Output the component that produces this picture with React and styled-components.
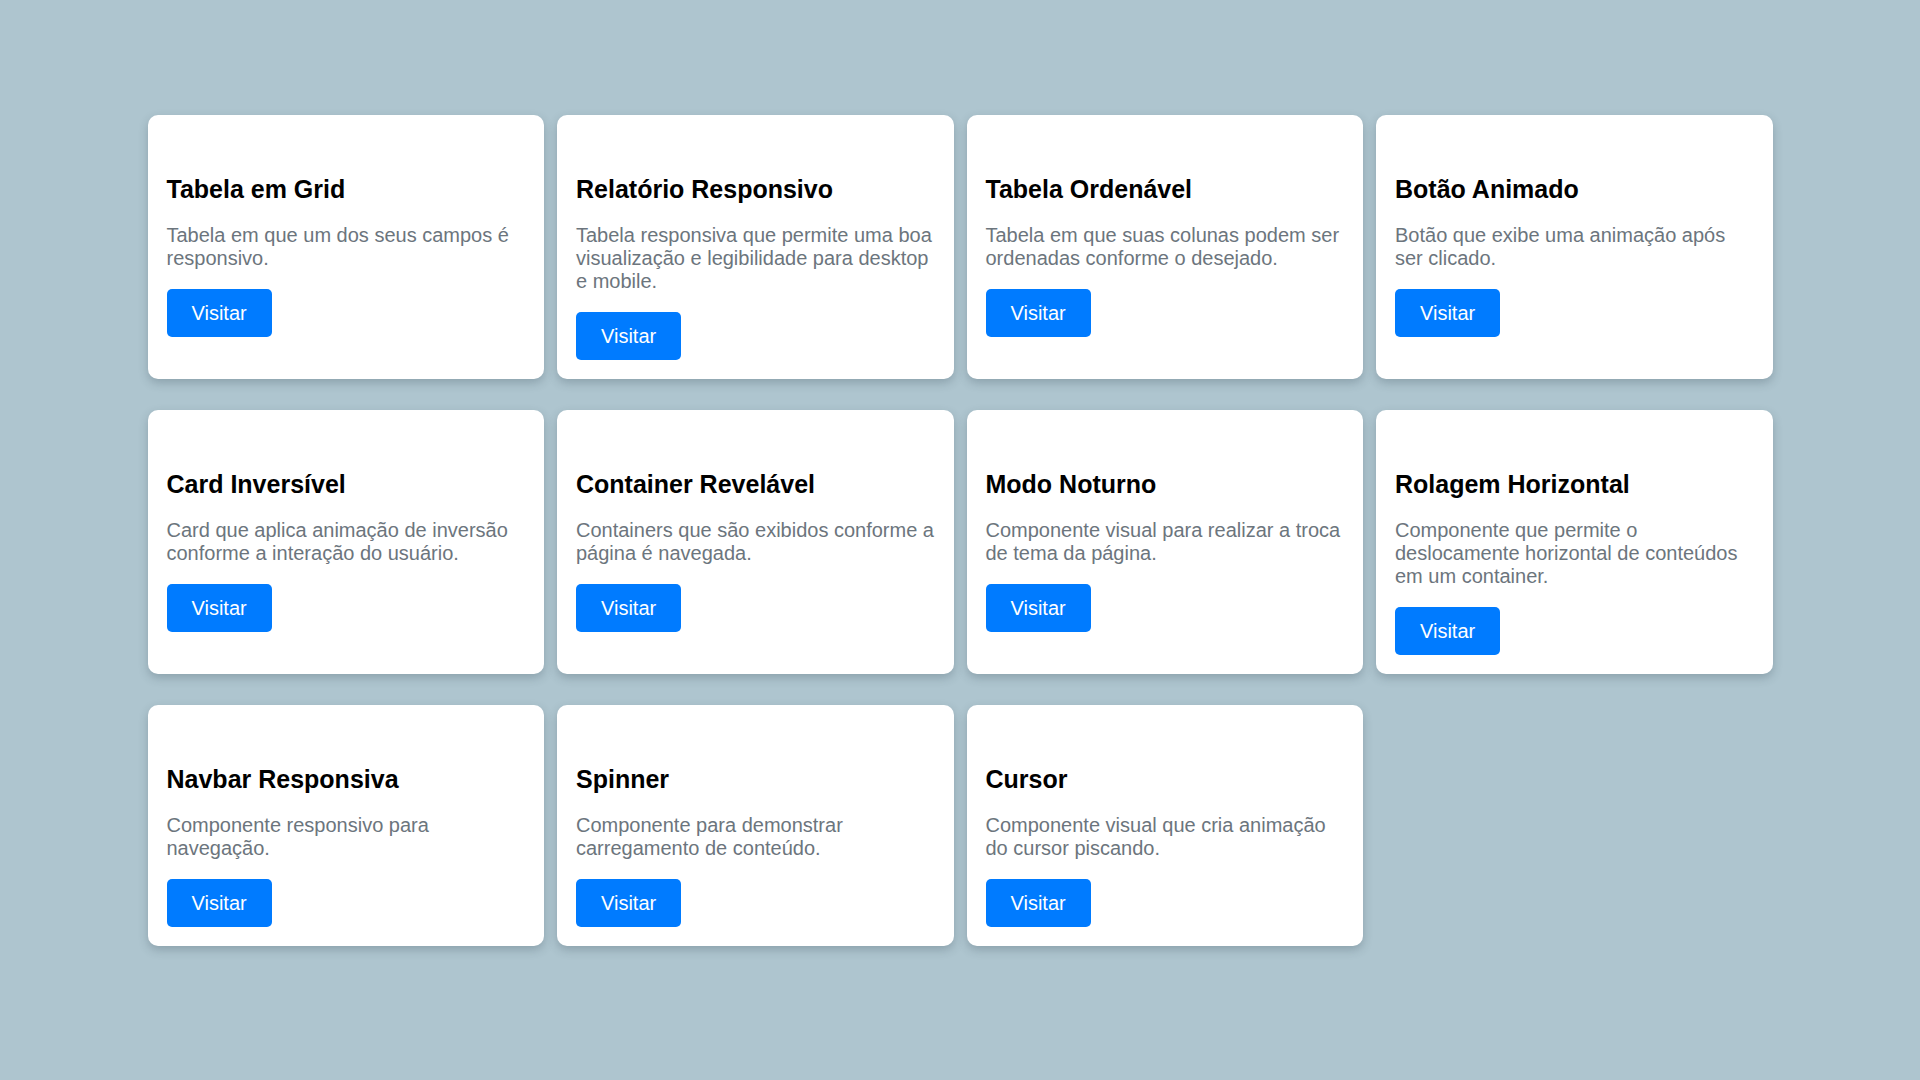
import React from 'react'
import styled, { createGlobalStyle } from 'styled-components'

const projects = [
  {
    title: 'Tabela em Grid',
    text: 'Tabela em que um dos seus campos é responsivo.',
  },
  {
    title: 'Relatório Responsivo',
    text: 'Tabela responsiva que permite uma boa visualização e legibilidade para desktop e mobile.',
  },
  {
    title: 'Tabela Ordenável',
    text: 'Tabela em que suas colunas podem ser ordenadas conforme o desejado.',
  },
  {
    title: 'Botão Animado',
    text: 'Botão que exibe uma animação após ser clicado.',
  },
  {
    title: 'Card Inversível',
    text: 'Card que aplica animação de inversão conforme a interação do usuário.',
  },
  {
    title: 'Container Revelável',
    text: 'Containers que são exibidos conforme a página é navegada.',
  },
  {
    title: 'Modo Noturno',
    text: 'Componente visual para realizar a troca de tema da página.',
  },
  {
    title: 'Rolagem Horizontal',
    text: 'Componente que permite o deslocamente horizontal de conteúdos em um container.',
  },
  {
    title: 'Navbar Responsiva',
    text: 'Componente responsivo para navegação.',
  },
  {
    title: 'Spinner',
    text: 'Componente para demonstrar carregamento de conteúdo.',
  },
  {
    title: 'Cursor',
    text: 'Componente visual que cria animação do cursor piscando.',
  },
]

const GlobalStyle = createGlobalStyle`
  html, body {
    margin: 0;
    padding: 0;
    background: #aec5cf;
    font-family: "Liberation Sans", Arial, sans-serif;
  }
  #root {
    min-height: 1080px;
  }
`

const Page = styled.main`
  padding-top: 115px;
  padding-bottom: 40px;
`

const Grid = styled.section`
  width: 1625px;
  margin: 0 auto;
  display: grid;
  grid-template-columns: repeat(4, 1fr);
  column-gap: 13px;
  row-gap: 31px;
`

const Card = styled.article`
  background: #fff;
  border-radius: 10px;
  box-shadow: 0 4px 10px rgba(40, 60, 70, 0.25);
  padding: 60px 17px 19px 19px;
  display: flex;
  flex-direction: column;
  align-items: flex-start;
`

const Title = styled.h2`
  margin: 0 0 21px;
  font-size: 25px;
  line-height: 28px;
  font-weight: bold;
  color: #000;
`

const Text = styled.p`
  margin: 0 0 19px;
  font-size: 20px;
  line-height: 23px;
  color: #6c757d;
`

const Button = styled.a`
  display: inline-flex;
  align-items: center;
  justify-content: center;
  height: 48px;
  padding: 0 25px;
  box-sizing: border-box;
  background: #007bff;
  color: #fff;
  font-size: 20px;
  border-radius: 5px;
  text-decoration: none;
  cursor: pointer;
`

export default function App() {
  return (
    <Page>
      <GlobalStyle />
      <Grid>
        {projects.map((p) => (
          <Card key={p.title}>
            <Title>{p.title}</Title>
            <Text>{p.text}</Text>
            <Button>Visitar</Button>
          </Card>
        ))}
      </Grid>
    </Page>
  )
}
